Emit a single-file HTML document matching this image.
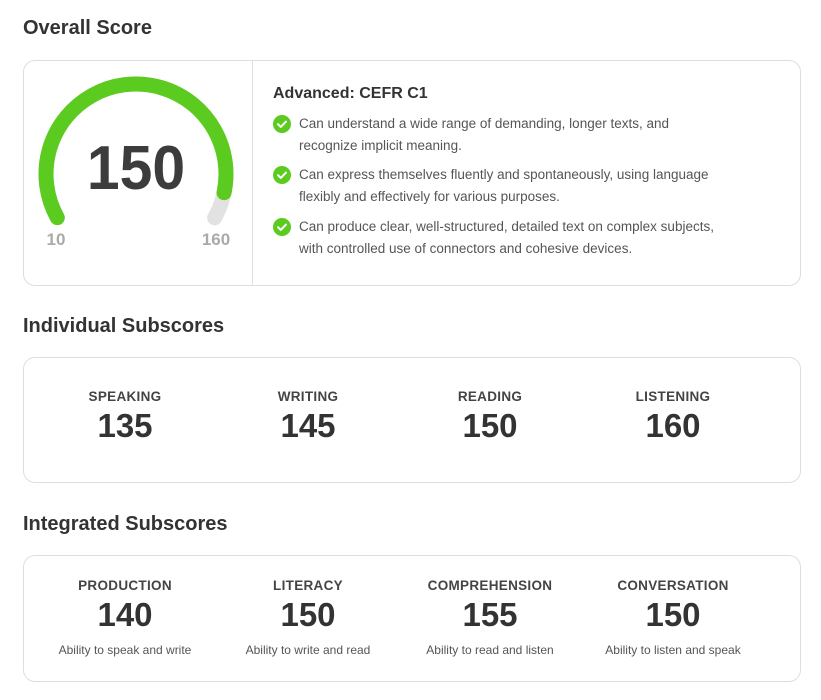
<!DOCTYPE html>
<html><head><style>
body{margin:0;background:#fff;font-family:"Liberation Sans",sans-serif;color:#3a3a3a;width:821px;height:700px;position:relative;overflow:hidden}
.h{position:absolute;left:23px;font-size:20px;font-weight:bold;color:#333;margin:0}
.card{position:absolute;left:23px;width:778px;border:1.5px solid #dedede;border-radius:12px;box-sizing:border-box}
.col{position:absolute;width:180px;margin-left:-90px;text-align:center}
.lab{font-size:13.5px;font-weight:bold;color:#444;letter-spacing:.3px}
.num{font-size:33px;font-weight:bold;color:#333;line-height:36px;margin-top:4px}
.d{font-size:12px;color:#555;margin-top:10px}
.b{position:absolute;left:299px;font-size:13.5px;line-height:22px;color:#555;width:480px}
.ck{position:absolute;left:273px}
</style></head><body>
<div class="h" style="top:17px">Overall Score</div>
<div class="card" style="top:60px;height:226px"></div>
<div style="position:absolute;left:252px;top:61px;width:1px;height:224px;background:#e0e0e0"></div>
<svg style="position:absolute;left:0;top:0" width="260" height="290">
<circle cx="136" cy="174" r="90" fill="none" stroke="#e2e2e2" stroke-width="15" stroke-linecap="round" stroke-dasharray="373.9 1000" transform="rotate(151 136 174)"/>
<circle cx="136" cy="174" r="90" fill="none" stroke="#5ccb1f" stroke-width="15" stroke-linecap="round" stroke-dasharray="347 1000" transform="rotate(151 136 174)"/>
<text x="136" y="189" text-anchor="middle" font-family="Liberation Sans" font-weight="bold" font-size="62" fill="#3c3c3c" transform="translate(136 0) scale(0.95 1) translate(-136 0)">150</text>
<text x="56" y="245" text-anchor="middle" font-family="Liberation Sans" font-weight="bold" font-size="17" fill="#aaa">10</text>
<text x="216" y="245" text-anchor="middle" font-family="Liberation Sans" font-weight="bold" font-size="17" fill="#aaa">160</text>
</svg>
<div style="position:absolute;left:273px;top:85px;font-size:16px;font-weight:bold;color:#333">Advanced: CEFR C1</div>
<svg class="ck" style="top:115px" width="18" height="18"><circle cx="9" cy="9" r="9" fill="#5ccb1f"/><path d="M5 9.2l2.8 2.7L13 6.6" stroke="#fff" stroke-width="2" fill="none" stroke-linecap="round" stroke-linejoin="round"/></svg>
<svg class="ck" style="top:166px" width="18" height="18"><circle cx="9" cy="9" r="9" fill="#5ccb1f"/><path d="M5 9.2l2.8 2.7L13 6.6" stroke="#fff" stroke-width="2" fill="none" stroke-linecap="round" stroke-linejoin="round"/></svg>
<svg class="ck" style="top:218px" width="18" height="18"><circle cx="9" cy="9" r="9" fill="#5ccb1f"/><path d="M5 9.2l2.8 2.7L13 6.6" stroke="#fff" stroke-width="2" fill="none" stroke-linecap="round" stroke-linejoin="round"/></svg>
<div class="b" style="top:113px">Can understand a wide range of demanding, longer texts, and<br>recognize implicit meaning.</div>
<div class="b" style="top:164px">Can express themselves fluently and spontaneously, using language<br>flexibly and effectively for various purposes.</div>
<div class="b" style="top:216px">Can produce clear, well-structured, detailed text on complex subjects,<br>with controlled use of connectors and cohesive devices.</div>

<div class="h" style="top:315px">Individual Subscores</div>
<div class="card" style="top:357px;height:126px"></div>
<div class="col" style="left:125px;top:389px"><div class="lab">SPEAKING</div><div class="num">135</div></div>
<div class="col" style="left:308px;top:389px"><div class="lab">WRITING</div><div class="num">145</div></div>
<div class="col" style="left:490px;top:389px"><div class="lab">READING</div><div class="num">150</div></div>
<div class="col" style="left:673px;top:389px"><div class="lab">LISTENING</div><div class="num">160</div></div>

<div class="h" style="top:513px">Integrated Subscores</div>
<div class="card" style="top:555px;height:127px"></div>
<div class="col" style="left:125px;top:578px"><div class="lab">PRODUCTION</div><div class="num">140</div><div class="d">Ability to speak and write</div></div>
<div class="col" style="left:308px;top:578px"><div class="lab">LITERACY</div><div class="num">150</div><div class="d">Ability to write and read</div></div>
<div class="col" style="left:490px;top:578px"><div class="lab">COMPREHENSION</div><div class="num">155</div><div class="d">Ability to read and listen</div></div>
<div class="col" style="left:673px;top:578px"><div class="lab">CONVERSATION</div><div class="num">150</div><div class="d">Ability to listen and speak</div></div>
</body></html>
